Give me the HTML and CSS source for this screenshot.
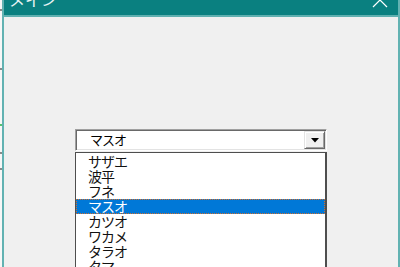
FILE: index.html
```html
<!DOCTYPE html>
<html lang="ja">
<head>
    <meta charset="UTF-8">
    <title>メイン</title>
    <link rel="stylesheet" href="styles.css">
</head>
<body>

    <div class="screen">
        <!-- 後ろのウィンドウの端 -->
        <div class="behind">
            <span class="mark" style="margin-top:9px"></span>
            <span class="mark" style="margin-top:57px"></span>
            <span class="mark green" style="margin-top:54px"></span>
            <span class="mark" style="margin-top:26px"></span>
            <span class="mark" style="margin-top:14px"></span>
        </div>

        <div class="window">
            <div class="titlebar">
                <span class="title">メイン</span>
                <svg class="close" width="16" height="9" viewBox="0 0 16 9">
                    <line x1="1" y1="-7" x2="15" y2="7" stroke="#fff" stroke-width="1.2"/>
                    <line x1="15" y1="-7" x2="1" y2="7" stroke="#fff" stroke-width="1.2"/>
                </svg>
            </div>

            <div class="client">
                <div class="combo">
                    <span class="combo-text">マスオ</span>
                    <span class="combo-btn">
                        <svg width="8" height="5" viewBox="0 0 8 5"><polygon points="0,0 8,0 4,4.5" fill="#000"/></svg>
                    </span>
                </div>
                <ul class="list">
                    <li>サザエ</li>
                    <li>波平</li>
                    <li>フネ</li>
                    <li class="selected">マスオ</li>
                    <li>カツオ</li>
                    <li>ワカメ</li>
                    <li>タラオ</li>
                    <li>タマ</li>
                </ul>
            </div>
        </div>
    </div>

</body>
</html>
```

FILE: styles.css
```css
html, body {
    margin: 0;
    padding: 0;
    height: 100%;
    overflow: hidden;
}
body {
    font-family: 'Noto Sans CJK JP', 'DejaVu Sans', sans-serif;
    background-color: #fafafa;
}
.screen {
    display: flex;
    height: 267px;
}
.behind {
    width: 2px;
    display: flex;
    flex-direction: column;
    background: #f7f7f7;
}
.mark {
    display: block;
    width: 2px;
    height: 2px;
    background: #8a8a8a;
}
.mark.green {
    background: #58c070;
}
.window {
    flex: 1;
    display: flex;
    flex-direction: column;
    border-left: 2px solid #62b2b2;
    border-right: 2px solid #62b2b2;
    background: #f0f0f0;
    overflow: hidden;
}
.titlebar {
    flex-shrink: 0;
    height: 15px;
    background-color: #0a8080;
    border-bottom: 2px solid #5fb0b0;
    display: flex;
    justify-content: space-between;
    align-items: flex-start;
    overflow: hidden;
    color: #fff;
}
.title {
    font-size: 16px;
    line-height: 20px;
    margin-top: -11px;
    margin-left: 5px;
    color: #e8f4f4;
}
.close {
    margin-right: 10px;
}
.client {
    flex: 1;
    min-height: 0;
    overflow: hidden;
    padding: 112px 0 0 71px;
}
.combo {
    width: 252px;
    height: 22px;
    box-sizing: border-box;
    background: #fff;
    border: 1px solid;
    border-color: #a0a0a0 #ffffff #ffffff #a0a0a0;
    box-shadow: inset 1px 1px 0 #696969, inset -1px -1px 0 #e3e3e3;
    display: flex;
    align-items: center;
    justify-content: space-between;
    font-size: 13px;
    color: #000;
}
.combo-text {
    padding-left: 14px;
    line-height: 18px;
    letter-spacing: -1px;
}
.combo-btn {
    width: 21px;
    height: 18px;
    margin-right: 1px;
    box-sizing: border-box;
    background: #f0f0f0;
    border: 1px solid;
    border-color: #e3e3e3 #696969 #696969 #e3e3e3;
    box-shadow: inset 1px 1px 0 #ffffff, inset -1px -1px 0 #a0a0a0;
    display: flex;
    align-items: center;
    justify-content: center;
}
.list {
    list-style: none;
    margin: 1px 0 0 0;
    padding: 1px 0 0 0;
    width: 252px;
    box-sizing: border-box;
    background: #fff;
    border: 1px solid #4e4e4e;
    border-right-width: 2px;
    border-bottom: none;
    font-size: 14px;
    letter-spacing: -1px;
    color: #111;
}
.list li {
    height: 15px;
    line-height: 15px;
    padding-left: 12px;
    white-space: nowrap;
}
.list li.selected {
    background-color: #0078d7;
    color: #fff;
    outline: 1px dotted #d07030;
    outline-offset: -1px;
}
```
